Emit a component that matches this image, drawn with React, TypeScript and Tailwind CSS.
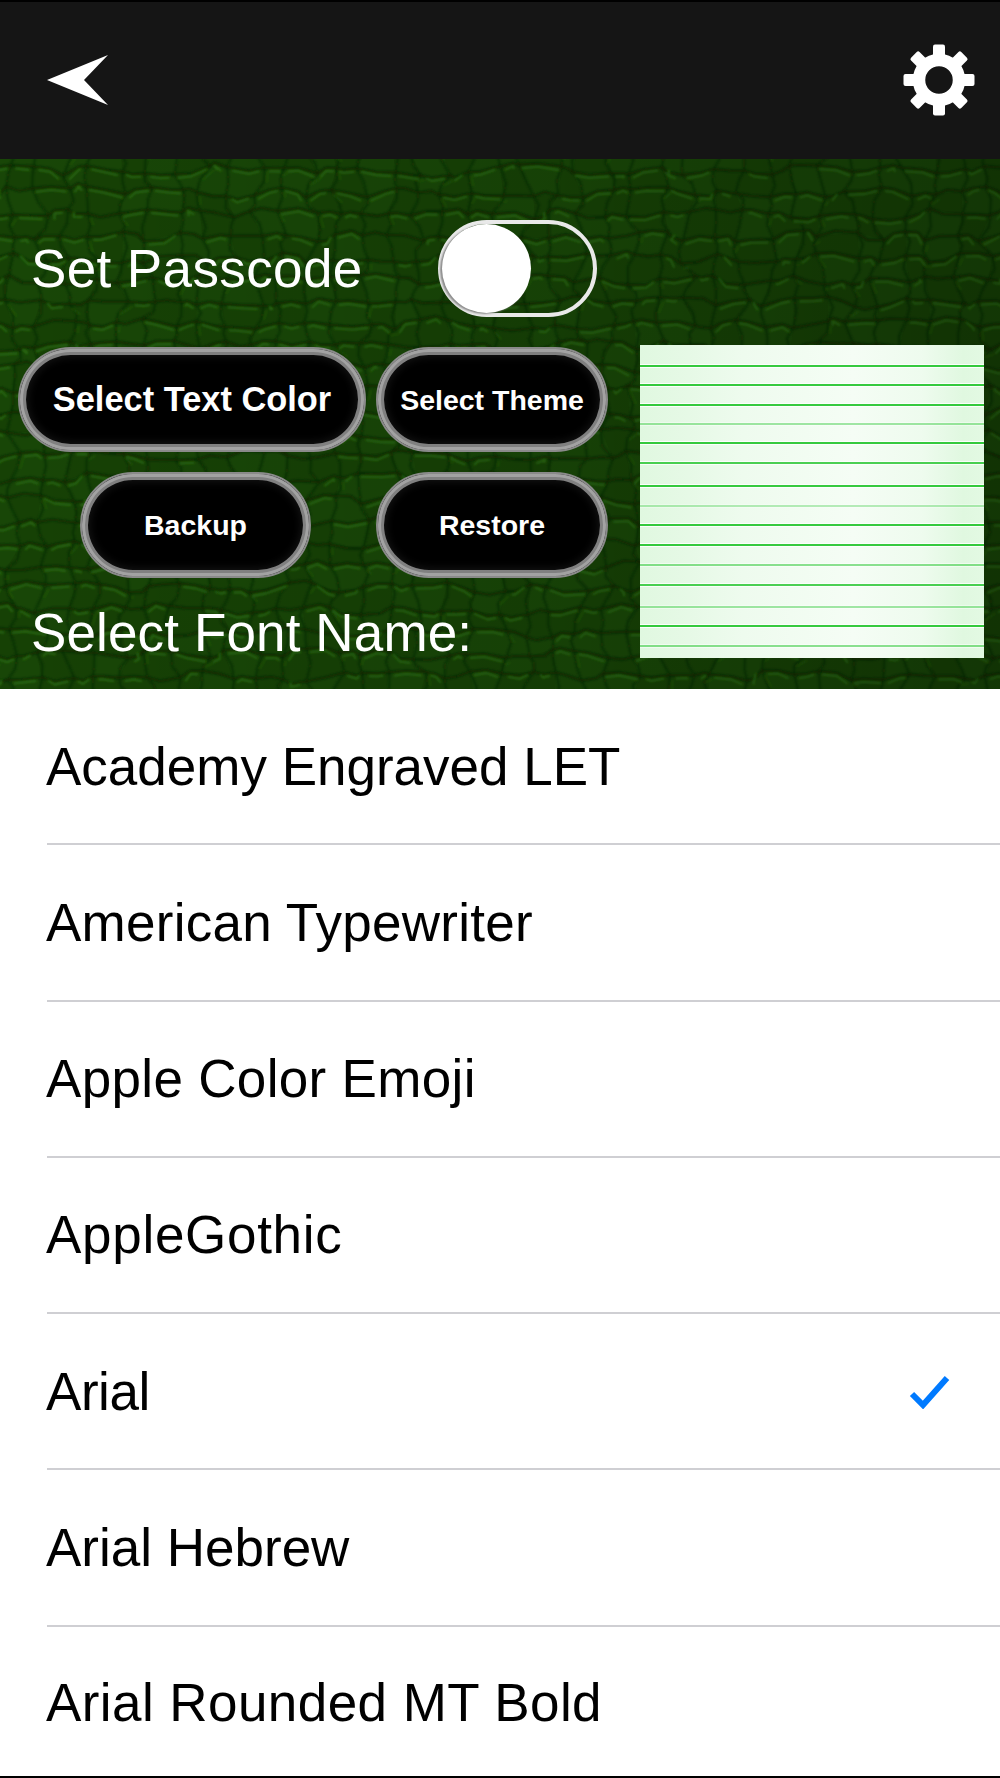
import { useMemo } from "react";

const W = 1000;
const H = 530;
const CX = 27;
const CY = 22;

function makeTexture() {
  let seed = 7331;
  const rnd = () => {
    seed = (seed * 16807) % 2147483647;
    return seed / 2147483647;
  };
  const cols = Math.ceil(W / CX) + 2;
  const rows = Math.ceil(H / CY) + 2;
  const p: [number, number][][] = [];
  for (let r = 0; r < rows; r++) {
    const row: [number, number][] = [];
    for (let c = 0; c < cols; c++) {
      row.push([(c - 0.5) * CX + (rnd() - 0.5) * 17, (r - 0.5) * CY + (rnd() - 0.5) * 11]);
    }
    p.push(row);
  }
  const f = (n: number) => n.toFixed(1);
  let dark = "";
  let darkV = "";
  let light = "";
  let lightV = "";
  let cells = "";
  for (let r = 0; r < rows - 1; r++) {
    for (let c = 0; c < cols - 1; c++) {
      const a = p[r][c];
      const b = p[r][c + 1];
      const d = p[r + 1][c];
      const e = p[r + 1][c + 1];
      const mx = (a[0] + b[0]) / 2 + (rnd() - 0.5) * 9;
      const my = (a[1] + b[1]) / 2 + (rnd() - 0.5) * 8;
      const vx = (a[0] + d[0]) / 2 + (rnd() - 0.5) * 10;
      const vy = (a[1] + d[1]) / 2 + (rnd() - 0.5) * 6;
      dark += `M${f(a[0])} ${f(a[1])}L${f(mx)} ${f(my)}L${f(b[0])} ${f(b[1])}`;
      darkV += `M${f(a[0])} ${f(a[1])}L${f(vx)} ${f(vy)}L${f(d[0])} ${f(d[1])}`;
      if (rnd() > 0.25) {
        const s = 3 + rnd() * 4;
        light += `M${f(a[0] + s)} ${f(a[1] + 3.5)}L${f(mx)} ${f(my + 3)}L${f(b[0] - s)} ${f(b[1] + 3.5)}`;
      }
      if (rnd() > 0.75) {
        lightV += `M${f(a[0] + 3)} ${f(a[1] + 5)}L${f(vx + 3)} ${f(vy)}`;
      }
      if (rnd() > 0.55) {
        cells += `M${f(a[0])} ${f(a[1])}L${f(b[0])} ${f(b[1])}L${f(e[0])} ${f(e[1])}L${f(d[0])} ${f(d[1])}Z`;
      }
    }
  }
  return { dark, darkV, light, lightV, cells };
}

function Texture() {
  const t = useMemo(makeTexture, []);
  return (
    <svg className="absolute inset-0 h-full w-full" viewBox={`0 0 ${W} ${H}`} preserveAspectRatio="none" aria-hidden="true">
      <defs>
        <filter id="soft" x="-5%" y="-5%" width="110%" height="110%">
          <feGaussianBlur stdDeviation="1" />
        </filter>
        <linearGradient id="shade" x1="0" y1="0" x2="1" y2="0">
          <stop offset="0" stopColor="#000000" stopOpacity="0" />
          <stop offset="0.55" stopColor="#000000" stopOpacity="0.08" />
          <stop offset="1" stopColor="#000000" stopOpacity="0.22" />
        </linearGradient>
      </defs>
      <rect width={W} height={H} fill="#164105" />
      <path d={t.cells} fill="#184607" />
      <g filter="url(#soft)" fill="none" strokeLinejoin="round" strokeLinecap="round">
        <path d={t.dark} stroke="#0b2803" strokeWidth="2.6" strokeOpacity="0.85" />
        <path d={t.darkV} stroke="#0b2803" strokeWidth="2.2" strokeOpacity="0.65" />
        <path d={t.light} stroke="#2d7214" strokeWidth="1.8" strokeOpacity="0.85" />
        <path d={t.lightV} stroke="#286511" strokeWidth="1.4" strokeOpacity="0.6" />
      </g>
      <rect width={W} height={H} fill="url(#shade)" />
    </svg>
  );
}

function PillButton({ label, width, textClass }: { label: string; width: string; textClass: string }) {
  return (
    <div
      className={`${width} flex h-full items-center justify-center rounded-full border-2 border-[#8a8a8a] bg-black pt-[1px] font-bold text-white shadow-[inset_0_0_0_3px_#a2a2a2,inset_0_0_0_6px_#808080,inset_0_0_10px_7px_#171717] ${textClass}`}
    >
      <span className="whitespace-nowrap">{label}</span>
    </div>
  );
}

const LINES: [number, string][] = [
  [22, "opacity-90"],
  [41, "opacity-90"],
  [61, "opacity-90"],
  [80, "opacity-40"],
  [99, "opacity-90"],
  [119, "opacity-80"],
  [142, "opacity-90"],
  [162, "opacity-30"],
  [181, "opacity-90"],
  [201, "opacity-90"],
  [221, "opacity-50"],
  [241, "opacity-80"],
  [263, "opacity-40"],
  [282, "opacity-90"],
  [302, "opacity-50"],
];

function NotePreview() {
  const gaps = LINES.map(([y], i) => y - (i === 0 ? 0 : LINES[i - 1][0]) - 2);
  return (
    <div className="flex h-[313px] w-[344px] flex-col bg-[linear-gradient(90deg,#e0f8e0_0%,#e6f9e6_14%,#eefbee_30%,#f5fdf5_62%,#eefbee_82%,#e0f8e0_94%,#e3f9e3_100%)]">
      {LINES.map(([y, op], i) => (
        <div key={y} className="shrink-0" style={{ paddingTop: gaps[i] }}>
          <div className={`h-[2px] bg-[#22c52c] shadow-[0_1px_0_#ffffff,0_-1px_0_#ffffff] ${op}`} />
        </div>
      ))}
    </div>
  );
}

const FONTS: [string, string][] = [
  ["Academy Engraved LET", "tracking-[0px]"],
  ["American Typewriter", "tracking-[0.25px]"],
  ["Apple Color Emoji", "tracking-[0.33px]"],
  ["AppleGothic", "tracking-[0.7px]"],
  ["Arial", "tracking-[-0.45px]"],
  ["Arial Hebrew", "tracking-[0px]"],
  ["Arial Rounded MT Bold", "tracking-[0.43px]"],
];

export default function App() {
  return (
    <div className="flex h-[1778px] w-[1000px] flex-col overflow-hidden bg-white font-['Liberation_Sans',Arial,sans-serif]">
      <header className="flex h-[159px] shrink-0 items-center justify-between border-t-2 border-black bg-[#151515] pb-[1px] pl-[47px] pr-[25px]">
        <svg width="62" height="50" viewBox="0 0 62 50" aria-hidden="true">
          <path d="M0 25 L61 0 L37 25 L61 50 Z" fill="#ffffff" />
        </svg>
        <svg width="72" height="72" viewBox="-36 -36 72 72" aria-hidden="true">
          <g fill="#ffffff">
            {[0, 45, 90, 135, 180, 225, 270, 315].map((a) => (
              <rect key={a} x="-6" y="-35.5" width="12" height="16" rx="2" transform={`rotate(${a})`} />
            ))}
          </g>
          <circle r="20" fill="none" stroke="#ffffff" strokeWidth="12.5" />
        </svg>
      </header>

      <section className="relative h-[530px] shrink-0 overflow-hidden">
        <Texture />
        <div className="relative flex h-full">
          <div className="flex w-[640px] shrink-0 flex-col pt-[61px]">
            <div className="flex h-[97px] items-center">
              <span className="ml-[31px] w-[407px] text-[53px] leading-none tracking-[0.38px] text-white">Set Passcode</span>
              <div className="relative h-[97px] w-[159px] rounded-full border-4 border-[#e9e9e9]">
                <div className="absolute left-0 top-0 h-[89px] w-[89px] rounded-full bg-white shadow-[-2px_1px_2px_#8a8a8a]" />
              </div>
            </div>
            <div className="mt-[30px] flex h-[105px] gap-[10px] pl-[18px]">
              <PillButton label="Select Text Color" width="w-[348px]" textClass="text-[34.4px]" />
              <PillButton label="Select Theme" width="w-[232px]" textClass="text-[28.5px]" />
            </div>
            <div className="mt-[20px] flex h-[106px] gap-[65px] pl-[80px]">
              <PillButton label="Backup" width="w-[231px]" textClass="text-[28.5px]" />
              <PillButton label="Restore" width="w-[232px]" textClass="text-[28.5px]" />
            </div>
            <span className="ml-[31px] mt-[29px] text-[53px] leading-[52px] tracking-[0.13px] text-white">Select Font Name:</span>
          </div>
          <div className="pt-[186px]">
            <NotePreview />
          </div>
        </div>
      </section>

      <ul className="flex h-[1089px] shrink-0 flex-col border-b-2 border-black text-[53px] leading-none text-black">
        {FONTS.map(([name, track], i) => (
          <li key={name} className={i < FONTS.length - 1 ? "h-[156.25px] shrink-0 pl-[47px]" : "min-h-0 flex-1 pl-[47px] pt-[3px]"}>
            <div className={`flex h-full items-center justify-between pr-[50px] ${i < FONTS.length - 1 ? "border-b-2 border-[#cfcfd3]" : ""}`}>
              <span className={`-ml-[1px] ${track}`}>{name}</span>
              {name === "Arial" && (
                <svg width="41" height="35" viewBox="0 0 41 35" aria-hidden="true">
                  <path d="M3 20 L14 31 L38 4" fill="none" stroke="#007aff" strokeWidth="6" strokeLinejoin="miter" />
                </svg>
              )}
            </div>
          </li>
        ))}
      </ul>
    </div>
  );
}
